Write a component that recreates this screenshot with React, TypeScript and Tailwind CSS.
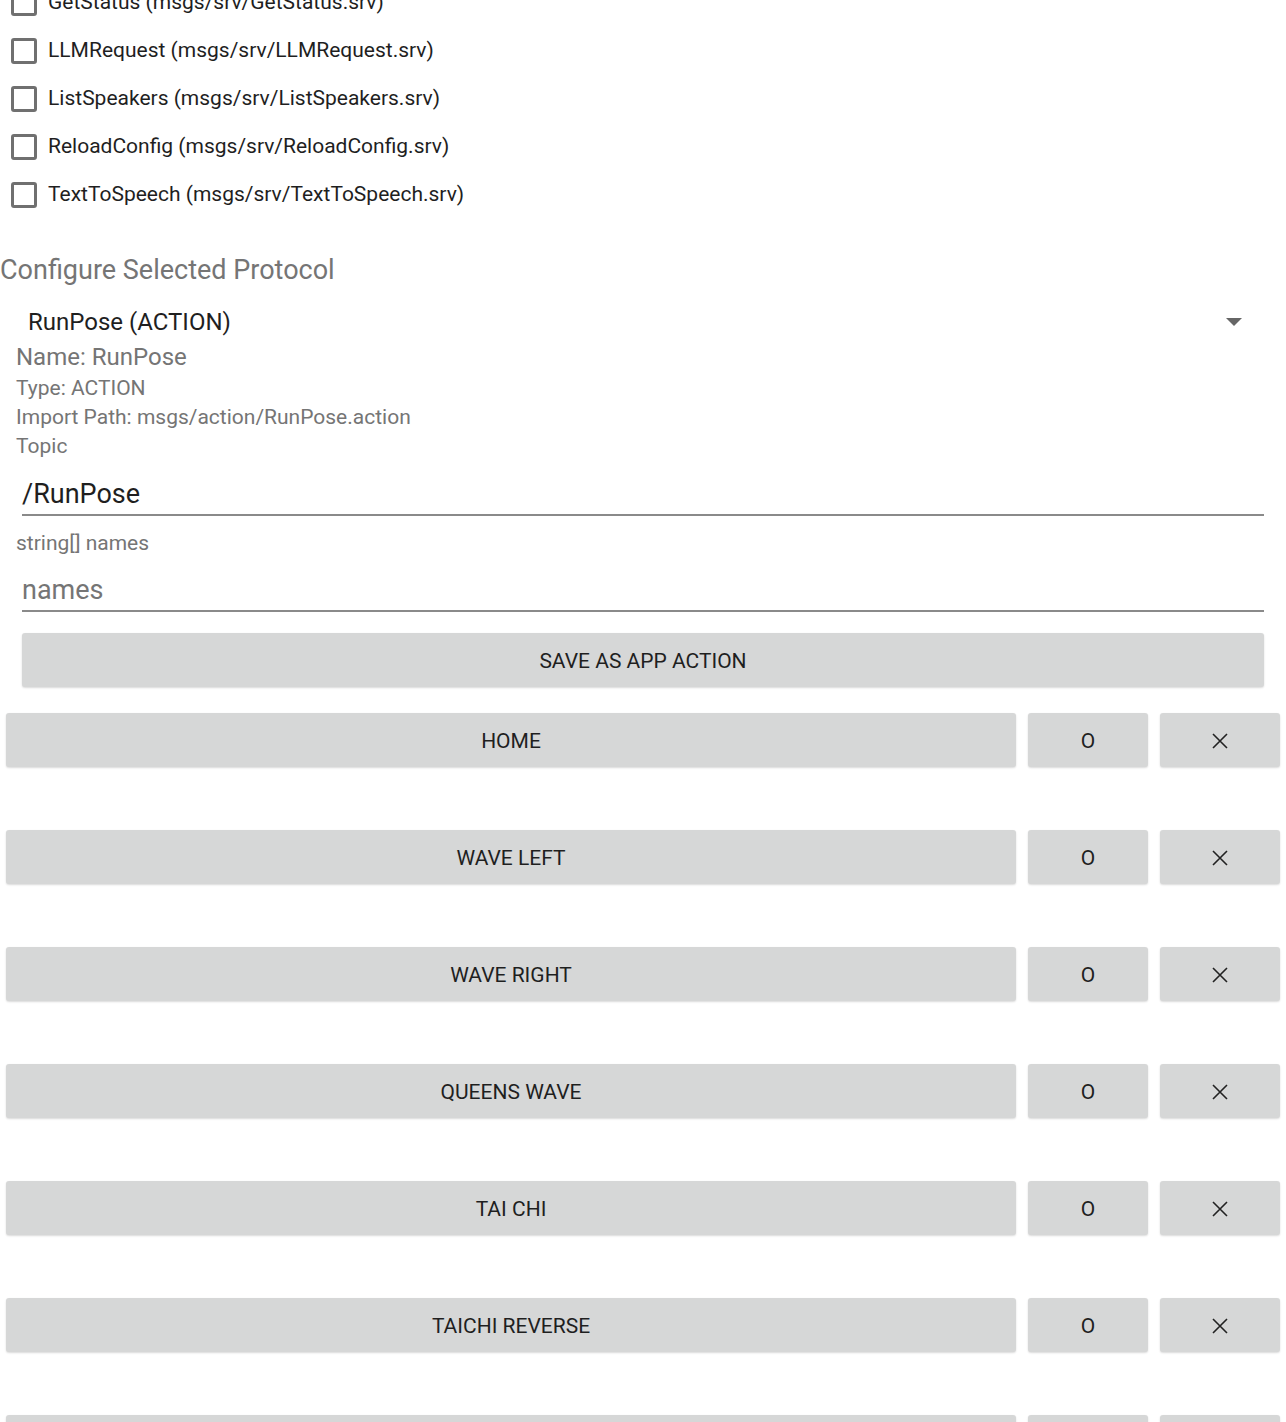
import React from "react";

const services = [
  "GetStatus (msgs/srv/GetStatus.srv)",
  "LLMRequest (msgs/srv/LLMRequest.srv)",
  "ListSpeakers (msgs/srv/ListSpeakers.srv)",
  "ReloadConfig (msgs/srv/ReloadConfig.srv)",
  "TextToSpeech (msgs/srv/TextToSpeech.srv)",
];

const actions = ["HOME", "WAVE LEFT", "WAVE RIGHT", "QUEENS WAVE", "TAI CHI", "TAICHI REVERSE", "WAVE BOTH"];

function XIcon() {
  return (
    <svg width="18" height="18" viewBox="0 0 18 18" fill="none" stroke="#222" strokeWidth="1.6">
      <path d="M2 2 L16 16 M16 2 L2 16" />
    </svg>
  );
}

export default function App() {
  return (
    <div className="w-[1286px] h-[1422px] overflow-hidden bg-white font-['Roboto',sans-serif]">
      <div className="-mt-[21px]">
        {services.map((s) => (
          <div key={s} className="h-[48px] flex items-center pl-[11px]">
            <div className="w-[26px] h-[26px] border-[3px] border-[#707070] rounded-[3px] shrink-0" />
            <span className="ml-[11px] text-[21px] text-[#1f1f1f]">{s}</span>
          </div>
        ))}
      </div>
      <div className="mt-[33px] text-[27px] leading-[36px] text-[#757575]">Configure Selected Protocol</div>
      <div className="mt-[18px] h-[32px] flex items-center justify-between pl-[28px] pr-[44px]">
        <span className="text-[24px] text-[#1f1f1f]">RunPose (ACTION)</span>
        <svg width="16" height="9" viewBox="0 0 16 9">
          <path d="M0 0 L16 0 L8 8 Z" fill="#666" />
        </svg>
      </div>
      <div className="pl-[16px] text-[#757575]">
        <div className="text-[24px] leading-[30px] mt-[4px]">Name: RunPose</div>
        <div className="text-[21px] leading-[29px] mt-[2px]">Type: ACTION</div>
        <div className="text-[21px] leading-[29px]">Import Path: msgs/action/RunPose.action</div>
        <div className="text-[21px] leading-[29px]">Topic</div>
      </div>
      <div className="mx-[22px] mt-[17px] border-b-[2px] border-[#8a8a8a] h-[38px] flex items-start">
        <span className="text-[27px] leading-[32px] text-[#1f1f1f]">/RunPose</span>
      </div>
      <div className="pl-[16px] mt-[13px] text-[21px] leading-[29px] text-[#757575]">string[] names</div>
      <div className="mx-[22px] mt-[16px] border-b-[2px] border-[#8a8a8a] h-[38px] flex items-start">
        <span className="text-[27px] leading-[32px] text-[#757575]">names</span>
      </div>
      <div className="mx-[22px] mt-[21px] h-[54px] pt-[4px] rounded-[3px] bg-[#d6d7d7] shadow-[0_1px_2px_rgba(0,0,0,0.15)] flex items-center justify-center text-[21px] text-[#1f1f1f]">
        SAVE AS APP ACTION
      </div>
      <div className="mt-[26px] flex flex-col gap-[63px]">
        {actions.map((a) => (
          <div key={a} className="flex gap-[12px] pl-[6px] pr-[6px] h-[54px]">
            <div className="w-[1010px] pt-[4px] rounded-[3px] bg-[#d6d7d7] shadow-[0_1px_2px_rgba(0,0,0,0.15)] flex items-center justify-center text-[21px] text-[#1f1f1f]">
              {a}
            </div>
            <div className="w-[120px] pt-[4px] rounded-[3px] bg-[#d6d7d7] shadow-[0_1px_2px_rgba(0,0,0,0.15)] flex items-center justify-center text-[21px] text-[#1f1f1f]">
              O
            </div>
            <div className="w-[120px] pt-[2px] rounded-[3px] bg-[#d6d7d7] shadow-[0_1px_2px_rgba(0,0,0,0.15)] flex items-center justify-center">
              <XIcon />
            </div>
          </div>
        ))}
      </div>
    </div>
  );
}
